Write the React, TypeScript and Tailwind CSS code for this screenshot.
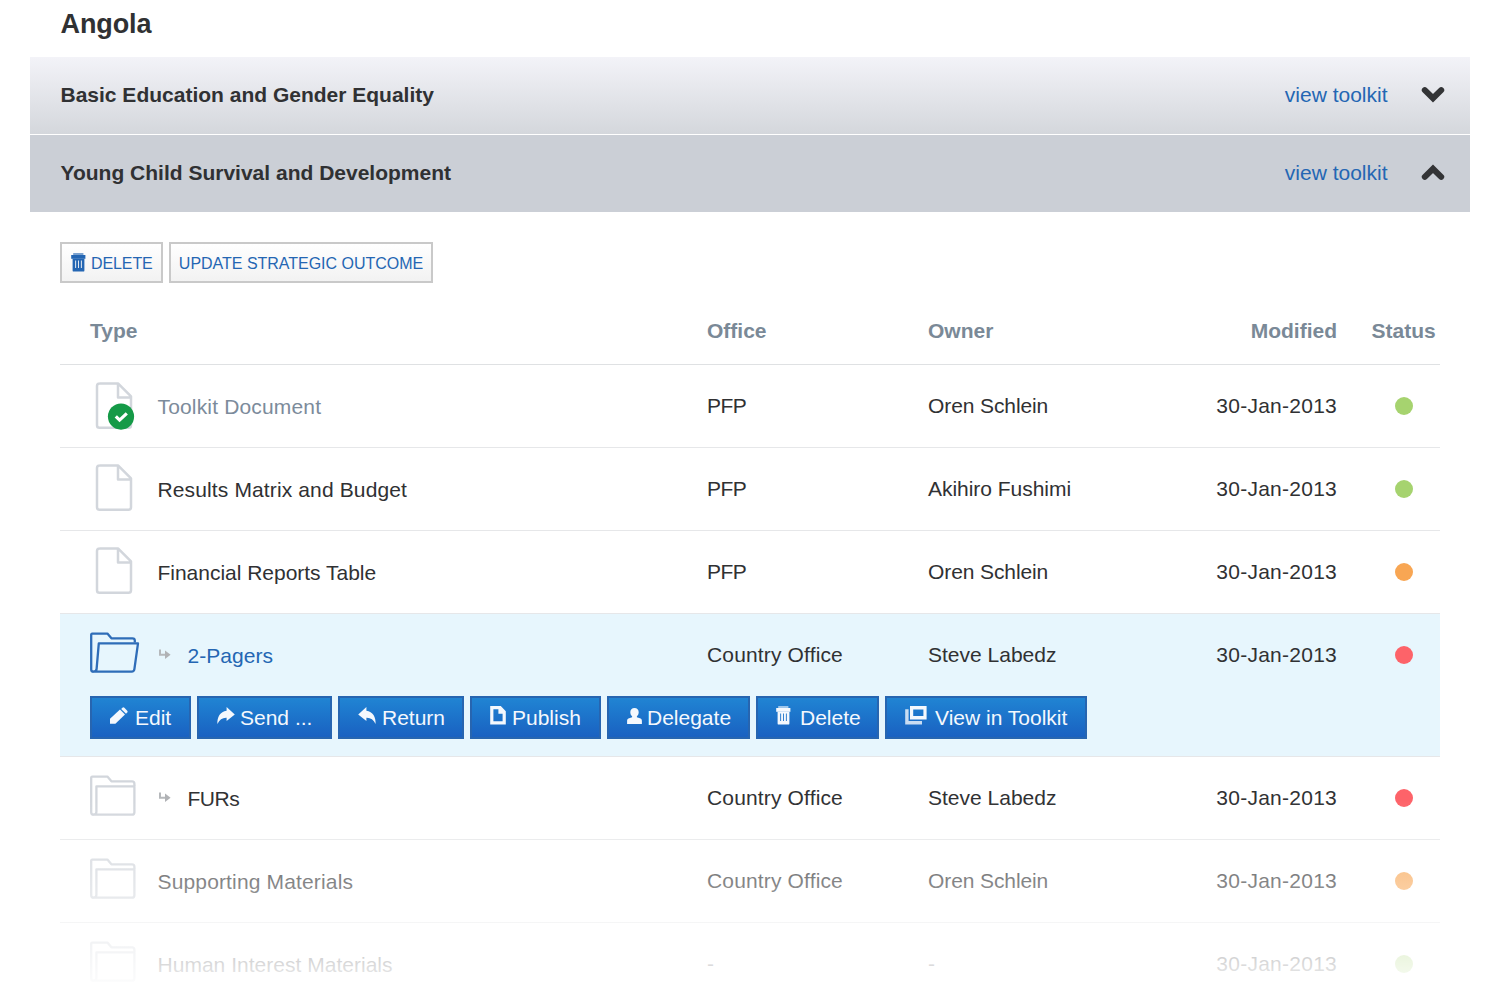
import React from "react";

type IconProps = { className?: string };

function Chevron({ up = false }: { up?: boolean }) {
  return (
    <svg
      width="24"
      height="18"
      viewBox="0 0 24 18"
      className={up ? "mb-[3px] rotate-180" : "mb-px"}
      fill="none"
      stroke="#333436"
      strokeWidth="6"
      strokeLinecap="round"
      strokeLinejoin="miter"
    >
      <path d="M3.8 4.2 L12 12.2 L20.2 4.2" />
    </svg>
  );
}

function TrashIcon({ className = "" }: IconProps) {
  return (
    <svg width="15" height="19" viewBox="0 0 15 19" className={className} fill="currentColor">
      <path d="M2.2 0H12.4V2H2.2z" opacity="0.6" />
      <path d="M0.2 2H14.4V5.8H0.2z" />
      <path
        fillRule="evenodd"
        d="M1.6 5.8H13.4V17.4Q13.4 18.6 12.2 18.6H2.8Q1.6 18.6 1.6 17.4zM4.2 7.6V15H5.1V7.6zM7 7.6V15H7.9V7.6zM9.9 7.6V15H10.8V7.6z"
      />
    </svg>
  );
}

function PencilIcon() {
  return (
    <svg width="18" height="17" viewBox="0 0 18 17" fill="currentColor">
      <path d="M0 16.8V11.8L10 2.6L15 7.6L5.4 16.8z" />
      <path d="M11.2 1.9L12.4 0.7Q13.4 -0.1 14.4 0.8L17.2 3.7Q18 4.7 17.2 5.6L16 6.8z" />
    </svg>
  );
}

function ForwardIcon({ flip = false }: { flip?: boolean }) {
  return (
    <svg width="18" height="18" viewBox="0 0 18 18" fill="currentColor" className={flip ? "-scale-x-100" : ""}>
      <path d="M9.6 0L17.8 7.4L9.6 14V10.8C5.4 10.6 2.6 12.6 0.4 17C0 10.2 3.2 4.6 9.6 3.8z" />
    </svg>
  );
}

function PublishIcon() {
  return (
    <svg width="16" height="19" viewBox="0 0 16 19" fill="currentColor">
      <path fillRule="evenodd" d="M0.2 0H10.8L15.8 5.2V18.6H0.2zM3.4 3.2V15.2H12.6V7.8H8.4V3.2z" />
    </svg>
  );
}

function PersonIcon() {
  return (
    <svg width="15" height="16" viewBox="0 0 15 16" fill="currentColor">
      <path d="M7.5 0C10.1 0 11.7 1.9 11.7 4.2C11.7 6 10.9 7.4 9.9 8.3V9.2L13.6 10.6C14.6 11.1 14.9 12.1 14.9 13.2V16H0.1V13.2C0.1 12.1 0.4 11.1 1.4 10.6L5.1 9.2V8.3C4.1 7.4 3.3 6 3.3 4.2C3.3 1.9 4.9 0 7.5 0z" />
    </svg>
  );
}

function WindowsIcon() {
  return (
    <svg width="22" height="19" viewBox="0 0 22 19" fill="currentColor">
      <path fillRule="evenodd" d="M5 0H21.6V13.4H5zM8.2 3.6V10H18.4V3.6z" />
      <path d="M0.2 3.2H3.6V15H17V18.6H0.2z" opacity="0.8" />
    </svg>
  );
}

function PageIcon({ checked = false }: { checked?: boolean }) {
  return (
    <svg width="48" height="54" viewBox="0 0 48 54" fill="none" className={checked ? "" : "mb-[2px]"}>
      <path
        d="M9.5 4.4H28L41 17.4V46.2Q41 48.8 38.4 48.8H9.6Q7 48.8 7 46.2V7Q7 4.4 9.6 4.4M28 5V18.4H40.6"
        stroke="#d2d6dc"
        strokeWidth="2.5"
        strokeLinejoin="round"
      />
      {checked && (
        <>
          <circle cx="31" cy="37.6" r="13.1" fill="#159a47" />
          <path d="M25.8 37.3L29.6 41.1L36.8 34.3" stroke="#fff" strokeWidth="3.2" />
        </>
      )}
    </svg>
  );
}

function FolderIcon({ open = false }: { open?: boolean }) {
  return open ? (
    <svg width="50" height="42" viewBox="0 0 50 42" className="mb-[4px]" fill="none" stroke="#2f6db8" strokeWidth="2.3" strokeLinejoin="round">
      <path d="M44.8 10.4V8.6Q44.8 6.3 42.4 6.3H21.4L17.4 1.6H2.2Q1.2 1.6 1.2 2.8V37.4Q1.2 39.7 3.5 39.7" />
      <path d="M8.8 11.4H48L44.4 37.2Q44 39.7 41.7 39.7H3.5Q6.4 39.7 6.6 36.8z" />
    </svg>
  ) : (
    <svg width="50" height="42" viewBox="0 0 50 42" className="mb-[4px]" fill="none" stroke="#d2d6dc" strokeWidth="2.3" strokeLinejoin="round">
      <path d="M44.4 11V8.8Q44.4 6.3 42 6.3H21.4L17.4 1.6H2.2Q1.2 1.6 1.2 2.8V37.2Q1.2 39.7 3.7 39.7" />
      <path d="M6.4 11.4H44.4V37.2Q44.4 39.7 42 39.7H3.7Q6.4 39.7 6.4 36.8z" />
    </svg>
  );
}

function ChildArrow() {
  return (
    <svg width="12" height="11" viewBox="0 0 12 11" fill="none" className="mb-[2px]">
      <path d="M1 0.4V5.7H7" stroke="#b5b8bb" strokeWidth="2" />
      <path d="M6 1.4L11.6 5.7L6 10z" fill="#b0b2b5" />
    </svg>
  );
}

function AccordionBar({ title, open = false }: { title: string; open?: boolean }) {
  return (
    <div
      className={
        "flex h-[77px] items-center pl-[30.5px] pr-[25.5px] " +
        (open ? "bg-[#cbcfd6]" : "bg-linear-to-b from-[#f3f3f8] to-[#d4d7dc]")
      }
    >
      <h2 className="flex-1 pb-0.5 font-bold">{title}</h2>
      <a className="mr-[33px] pb-0.5 text-[#2466b3]">view toolkit</a>
      <Chevron up={open} />
    </div>
  );
}

const DOTS = {
  green: "bg-[#a6d36f]",
  orange: "bg-[#f8a653]",
  red: "bg-[#fd6369]",
};

type Row = {
  icon: React.ReactNode;
  name: string;
  nameClass: string;
  child?: boolean;
  office: string;
  officeClass: string;
  owner: string;
  ownerClass: string;
  status: keyof typeof DOTS;
};

function TableRow({ row, children }: { row: Row; children?: React.ReactNode }) {
  return (
    <div className={"border-b border-[#e6e7e9] " + (children ? "bg-[#e7f6fd]" : "")}>
      <div className="flex h-[82px] items-center pl-[30px]">
        <div className="flex w-[617px] items-center">
          <span className="w-[67.5px]">{row.icon}</span>
          {row.child && (
            <span className="w-[30px] pl-px">
              <ChildArrow />
            </span>
          )}
          <span className={"pt-0.5 " + row.nameClass}>{row.name}</span>
        </div>
        <span className={"w-[221px] " + row.officeClass}>{row.office}</span>
        <span className={"w-[230px] " + row.ownerClass}>{row.owner}</span>
        <span className="w-[179px] text-right tracking-[0.25px]">30-Jan-2013</span>
        <span className={"ml-[58px] size-[18px] rounded-full " + DOTS[row.status]} />
      </div>
      {children}
    </div>
  );
}

const ROWS: Row[] = [
  { icon: <PageIcon checked />, name: "Toolkit Document", nameClass: "text-[#7c8b9b] tracking-[0.16px]", office: "PFP", officeClass: "tracking-[-0.6px]", owner: "Oren Schlein", ownerClass: "tracking-[-0.1px]", status: "green" },
  { icon: <PageIcon />, name: "Results Matrix and Budget", nameClass: "tracking-[0.13px]", office: "PFP", officeClass: "tracking-[-0.6px]", owner: "Akihiro Fushimi", ownerClass: "tracking-[-0.03px]", status: "green" },
  { icon: <PageIcon />, name: "Financial Reports Table", nameClass: "tracking-[-0.02px]", office: "PFP", officeClass: "tracking-[-0.6px]", owner: "Oren Schlein", ownerClass: "tracking-[-0.1px]", status: "orange" },
  { icon: <FolderIcon open />, name: "2-Pagers", nameClass: "text-[#2466b3] tracking-[0.05px]", child: true, office: "Country Office", officeClass: "tracking-[0.15px]", owner: "Steve Labedz", ownerClass: "", status: "red" },
  { icon: <FolderIcon />, name: "FURs", nameClass: "tracking-[-0.5px]", child: true, office: "Country Office", officeClass: "tracking-[0.15px]", owner: "Steve Labedz", ownerClass: "", status: "red" },
  { icon: <FolderIcon />, name: "Supporting Materials", nameClass: "tracking-[0.15px]", office: "Country Office", officeClass: "tracking-[0.15px]", owner: "Oren Schlein", ownerClass: "tracking-[-0.1px]", status: "orange" },
  { icon: <FolderIcon />, name: "Human Interest Materials", nameClass: "tracking-[0.02px]", office: "-", officeClass: "", owner: "-", ownerClass: "", status: "green" },
];

function Action({ width, gap, icon, label }: { width: string; gap: string; icon: React.ReactNode; label: string }) {
  return (
    <button
      className={
        "flex h-[43px] items-center border-2 border-[#2765b0] bg-linear-to-b from-[#2186d4] to-[#1a5fc0] bg-origin-border pl-[18px] whitespace-nowrap text-[#f4f8fd] " +
        width +
        " " +
        gap
      }
    >
      <span className="pb-[4px]">{icon}</span>
      <span>{label}</span>
    </button>
  );
}

function Actions() {
  return (
    <div className="flex h-[60px] gap-1.5 pl-[30px]">
      <Action width="w-[101px]" gap="gap-[7px]" icon={<PencilIcon />} label="Edit" />
      <Action width="w-[135px]" gap="gap-[5px]" icon={<ForwardIcon />} label="Send ..." />
      <Action width="w-[126px]" gap="gap-[6px]" icon={<ForwardIcon flip />} label="Return" />
      <Action width="w-[131px]" gap="gap-[6px]" icon={<PublishIcon />} label="Publish" />
      <Action width="w-[143px]" gap="gap-[5px]" icon={<PersonIcon />} label="Delegate" />
      <Action width="w-[123px]" gap="gap-[9px]" icon={<TrashIcon />} label="Delete" />
      <Action width="w-[202px]" gap="gap-[8px]" icon={<WindowsIcon />} label="View in Toolkit" />
    </div>
  );
}

export default function App() {
  return (
    <div
      className="relative h-[1000px] w-[1500px] overflow-hidden bg-white px-[30px] text-[21px] leading-[26px] text-[#303133]"
      style={{ fontFamily: '"Liberation Sans", Arial, sans-serif' }}
    >
      <h1 className="h-[57px] pt-2 pl-[30.5px] text-[27px] leading-[32px] font-bold tracking-[-0.1px]">Angola</h1>
      <div className="flex flex-col gap-px">
        <AccordionBar title="Basic Education and Gender Equality" />
        <AccordionBar title="Young Child Survival and Development" open />
      </div>
      <div className="px-[30px]">
        <div className="mt-[30px] flex gap-1.5 text-base text-[#2466b3]">
          <button className="flex h-[41px] w-[103px] items-center gap-[5px] border-2 border-[#c9c9c9] bg-linear-to-b from-white to-[#f2f2f2] pt-[2px] pl-[9px] tracking-[-0.1px]">
            <TrashIcon className="mb-[3px]" />
            DELETE
          </button>
          <button className="h-[41px] w-[264px] border-2 border-[#c9c9c9] bg-linear-to-b from-white to-[#f2f2f2] pt-[2px] tracking-[-0.02px] whitespace-nowrap">
            UPDATE STRATEGIC OUTCOME
          </button>
        </div>
        <div className="mt-[15px] flex h-[67px] items-center border-b border-[#dfe1e3] pl-[30px] font-bold text-[#7a8997]">
          <span className="w-[617px]">Type</span>
          <span className="w-[221px]">Office</span>
          <span className="w-[230px]">Owner</span>
          <span className="w-[179px] text-right">Modified</span>
          <span className="ml-[34.5px]">Status</span>
        </div>
        {ROWS.map((row) => (
          <TableRow key={row.name} row={row}>
            {row.name === "2-Pagers" ? <Actions /> : null}
          </TableRow>
        ))}
      </div>
      <div className="absolute inset-x-0 bottom-0 h-[200px] bg-linear-to-b from-white/0 to-white" />
    </div>
  );
}
